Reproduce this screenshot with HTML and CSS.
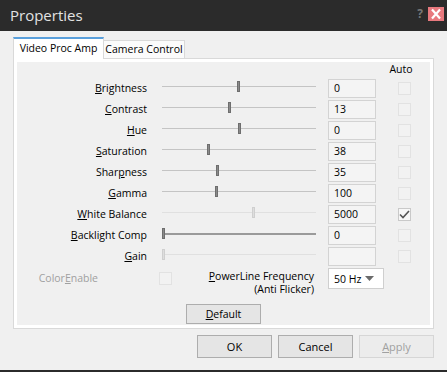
FILE: index.html
```html
<!DOCTYPE html>
<html>
<head>
	<title>Properties</title>
	<link rel="stylesheet" href="styles.css">
</head>
<body>
	<div class="window">
		<!-- dark title bar with help and close -->
		<div class="titlebar">
			<span class="title">Properties</span>
			<span class="help">?</span>
			<span class="close">
				<svg width="16" height="14" viewBox="0 0 16 14">
					<rect width="16" height="14" fill="#e8797e"/>
					<path d="M4 2.5 L12 11.5 M12 2.5 L4 11.5" stroke="#fff" stroke-width="2.2"/>
				</svg>
			</span>
		</div>

		<div class="content">
			<div class="tabs">
				<div class="tab active">Video Proc Amp</div>
				<div class="tab">Camera Control</div>
			</div>

			<div class="panel">
				<div class="grid">
					<div></div><div></div><div></div>
					<div class="auto-head">Auto</div>

					<div class="label"><u>B</u>rightness</div>
					<div class="slider"><div class="track"></div><div class="thumb" style="left: 49%"></div></div>
					<div class="value">0</div>
					<div class="check"></div>

					<div class="label"><u>C</u>ontrast</div>
					<div class="slider"><div class="track"></div><div class="thumb" style="left: 43%"></div></div>
					<div class="value">13</div>
					<div class="check"></div>

					<div class="label"><u>H</u>ue</div>
					<div class="slider"><div class="track"></div><div class="thumb" style="left: 49.5%"></div></div>
					<div class="value">0</div>
					<div class="check"></div>

					<div class="label"><u>S</u>aturation</div>
					<div class="slider"><div class="track"></div><div class="thumb" style="left: 29.5%"></div></div>
					<div class="value">38</div>
					<div class="check"></div>

					<div class="label">Shar<u>p</u>ness</div>
					<div class="slider"><div class="track"></div><div class="thumb" style="left: 35%"></div></div>
					<div class="value">35</div>
					<div class="check"></div>

					<div class="label"><u>G</u>amma</div>
					<div class="slider"><div class="track"></div><div class="thumb" style="left: 34.5%"></div></div>
					<div class="value">100</div>
					<div class="check"></div>

					<div class="label"><u>W</u>hite Balance</div>
					<div class="slider disabled"><div class="track"></div><div class="thumb" style="left: 58.5%"></div></div>
					<div class="value">5000</div>
					<div class="check checked">
						<svg width="11" height="9" viewBox="0 0 11 9"><path d="M1 4.5 L4 7.5 L10 1" fill="none" stroke="#555" stroke-width="1.6"/></svg>
					</div>

					<div class="label"><u>B</u>acklight Comp</div>
					<div class="slider dark"><div class="track"></div><div class="thumb" style="left: 0%"></div></div>
					<div class="value">0</div>
					<div class="check"></div>

					<div class="label"><u>G</u>ain</div>
					<div class="slider disabled"><div class="track"></div><div class="thumb" style="left: 0%"></div></div>
					<div class="value"></div>
					<div class="check"></div>
				</div>

				<div class="extra-row">
					<div class="label muted">Color<u>E</u>nable</div>
					<div class="check"></div>
					<div class="powerline"><u>P</u>owerLine Frequency<br>(Anti Flicker)</div>
					<div class="combo">
						<span>50 Hz</span>
						<svg width="9" height="5" viewBox="0 0 9 5"><path d="M0 0 H9 L4.5 5 Z" fill="#6a6a6a"/></svg>
					</div>
				</div>

				<div class="default-row">
					<button class="btn"><u>D</u>efault</button>
				</div>
			</div>

			<div class="actions">
				<button class="btn">OK</button>
				<button class="btn">Cancel</button>
				<button class="btn disabled"><u>A</u>pply</button>
			</div>
		</div>
	</div>
</body>
</html>
```

FILE: styles.css
```css
body {
	margin: 0;
	font-family: "Open Sans", "Noto Sans", sans-serif;
	font-size: 10.5px;
	color: #000;
}
.window {
	width: 447px;
	height: 372px;
	background-color: #f0f0f0;
	border-bottom: 2px solid #2b2b2b;
	box-sizing: border-box;
	display: flex;
	flex-direction: column;
}

/* title bar */
.titlebar {
	height: 31px;
	background-color: #2b2b2b;
	display: flex;
	align-items: center;
	padding: 0 3px 0 10px;
}
.title {
	flex: 1;
	color: #e2e2e2;
	font-size: 15px;
	margin-top: -1px;
}
.help {
	color: #777;
	font-size: 12px;
	font-weight: bold;
	margin-right: 5px;
	margin-top: -5px;
}
.close {
	display: flex;
	margin-top: -4px;
}

.content {
	padding: 6px 13px 0 13px;
}

/* tabs */
.tabs {
	display: flex;
	align-items: flex-end;
	height: 21px;
}
.tab {
	box-sizing: border-box;
	height: 18px;
	width: 81px;
	border: 1px solid #d9d9d9;
	border-left: none;
	border-bottom: none;
	background-color: #fbfbfb;
	line-height: 17px;
	text-align: center;
	white-space: nowrap;
}
.tab.active {
	width: 91px;
	height: 22px;
	margin-bottom: -1px;
	border-left: 1px solid #d9d9d9;
	border-top: 2px solid #5aa0dc;
	background-color: #fff;
	line-height: 19px;
	position: relative;
	z-index: 1;
}

/* tab page */
.panel {
	height: 271px;
	box-sizing: border-box;
	border: 1px solid #d9d9d9;
	box-shadow: inset 0 0 0 3px #fff;
	padding: 3px 0 0 0;
	display: flex;
	flex-direction: column;
}
.grid {
	display: grid;
	grid-template-columns: 133px 154px 45px 13px;
	grid-template-rows: 15px;
	grid-auto-rows: 19px;
	column-gap: 15px;
	row-gap: 2px;
}
.grid .value {
	margin-left: -3px;
}
.grid .check {
	margin-left: 7px;
}
.auto-head {
	justify-self: center;
	margin-left: 7px;
	line-height: 14px;
	white-space: nowrap;
}
.label {
	text-align: right;
	align-self: center;
	line-height: 14px;
	margin-top: -2px;
	white-space: nowrap;
}
.muted {
	color: #a0a0a0;
}

.slider {
	position: relative;
}
.track {
	position: absolute;
	left: 0;
	right: 0;
	top: 50%;
	height: 1px;
	margin-top: -3px;
	background-color: #c4c4c4;
}
.thumb {
	position: absolute;
	top: 50%;
	margin-top: -8px;
	width: 1px;
	height: 9px;
	border: 1px solid #6e6e6e;
	background-color: #8a8a8a;
}
.slider.dark .track {
	height: 2px;
	background-color: #9a9a9a;
}
.slider.disabled .track {
	background-color: #e0e0e0;
}
.slider.disabled .thumb {
	border-color: #cfcfcf;
	background-color: #dedede;
}

.value {
	box-sizing: border-box;
	height: 19px;
	border: 1px solid #d3d3d3;
	background-color: #f4f4f4;
	padding-left: 5px;
	line-height: 17px;
}
.check {
	box-sizing: border-box;
	width: 13px;
	height: 13px;
	align-self: center;
	border: 1px solid #e2e2e2;
	background-color: #f2f2f2;
	display: flex;
	align-items: center;
	justify-content: center;
}
.check.checked {
	border-color: #c9c9c9;
	background-color: #f7f7f7;
}

/* colour enable / powerline row */
.extra-row {
	display: flex;
	align-items: flex-start;
	margin-top: 2px;
	height: 28px;
}
.extra-row .label {
	align-self: flex-start;
	width: 84px;
	margin-top: 3px;
}
.extra-row .check {
	align-self: flex-start;
	margin: 4px 0 0 61px;
}
.powerline {
	width: 142px;
	text-align: right;
	line-height: 13px;
	margin-top: 2px;
	white-space: nowrap;
}
.combo {
	box-sizing: border-box;
	width: 56px;
	height: 21px;
	margin-left: 14px;
	border: 1px solid #cfcfcf;
	background-color: #fff;
	display: flex;
	align-items: center;
	justify-content: space-between;
	padding: 0 9px 0 5px;
}

.default-row {
	display: flex;
	justify-content: center;
	margin-top: 8px;
}

/* buttons */
.btn {
	box-sizing: border-box;
	width: 75px;
	height: 20px;
	border: 1px solid #adadad;
	background-color: #e5e5e5;
	font-family: "Open Sans", "Noto Sans", sans-serif;
	font-size: 10.5px;
	color: #000;
	padding: 0;
}
.actions {
	display: flex;
	justify-content: flex-end;
	gap: 6px;
	margin-top: 6px;
}
.actions .btn {
	height: 23px;
	font-size: 11px;
}
.btn.disabled {
	border-color: #d6d6d6;
	background-color: #ececec;
	color: #a0a0a0;
}
```
